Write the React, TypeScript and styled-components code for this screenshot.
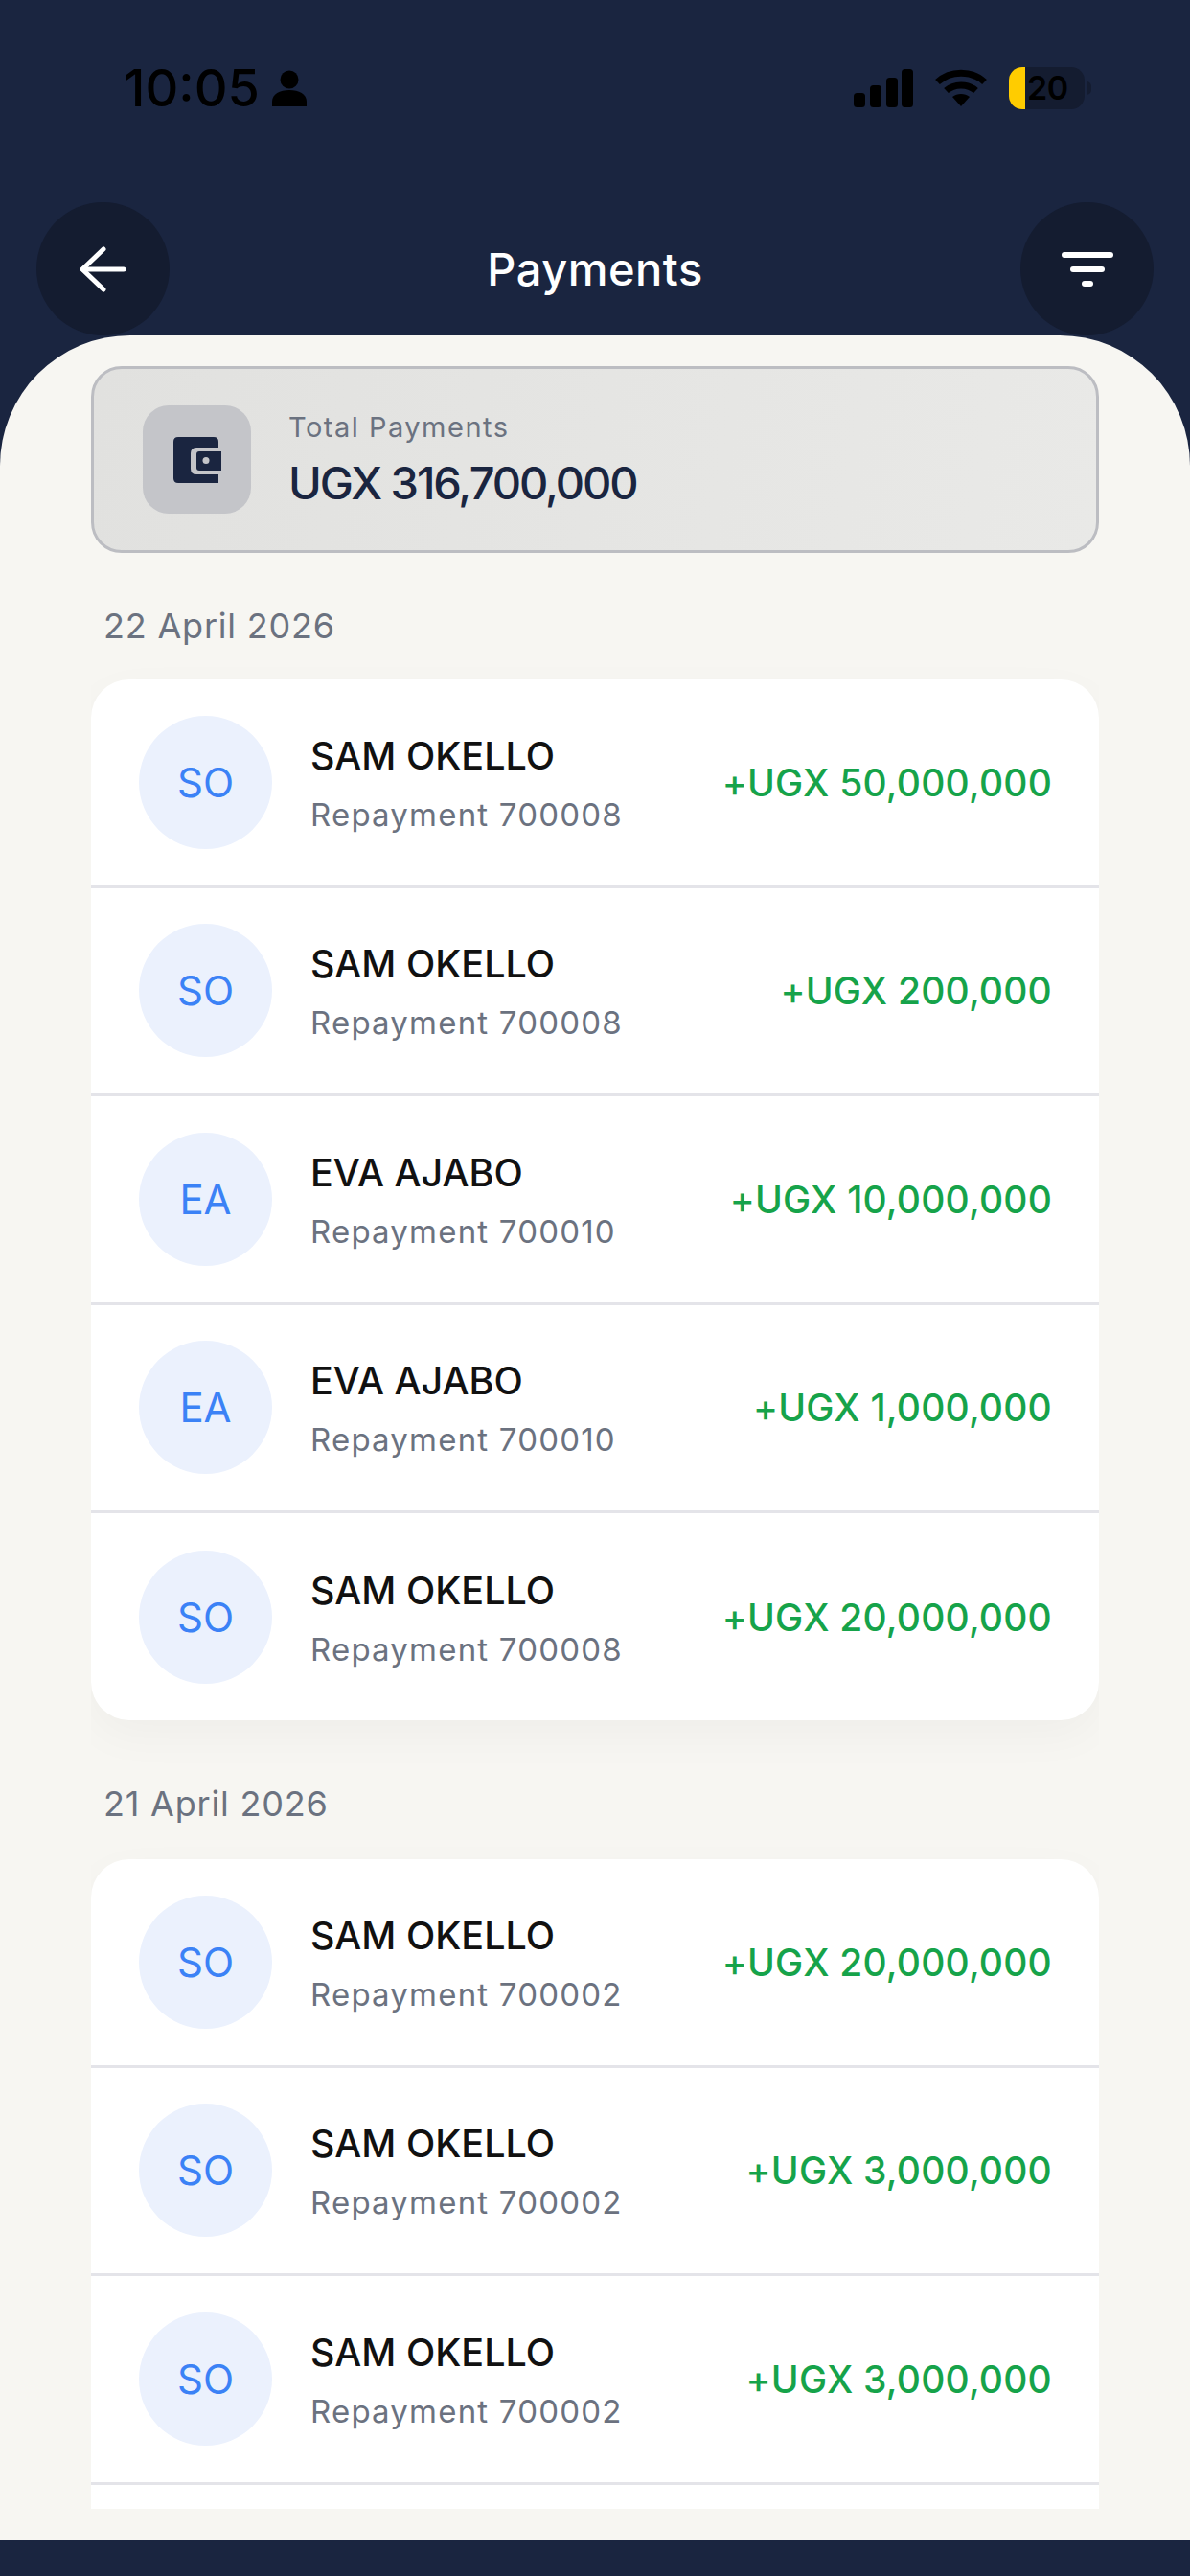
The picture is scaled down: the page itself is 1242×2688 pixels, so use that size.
import styled, { createGlobalStyle } from 'styled-components';

const GlobalStyle = createGlobalStyle`
  * {
    box-sizing: border-box;
  }

  html,
  body {
    margin: 0;
    padding: 0;
    background: #1a2540;
  }

  body {
    font-family: 'Inter', 'Liberation Sans', sans-serif;
  }
`;

const Page = styled.div`
  display: flex;
  flex-direction: column;
  width: 1242px;
  height: 2688px;
  padding-bottom: 38px;
  background: #1a2540;
  overflow: hidden;
`;

const StatusBar = styled.div`
  display: flex;
  justify-content: space-between;
  align-items: flex-start;
  height: 211px;
  padding: 66px 110px 0 129px;
  color: #000;
`;

const StatusLeft = styled.div`
  display: flex;
  align-items: center;
  gap: 13px;
  height: 52px;
`;

const Clock = styled.span`
  font-size: 54px;
  font-weight: 500;
  letter-spacing: 0;
  line-height: 52px;
`;

const StatusRight = styled.div`
  display: flex;
  align-items: center;
  gap: 23px;
  height: 52px;
`;

const Battery = styled.div`
  position: relative;
  display: flex;
  align-items: center;
  width: 79px;
  height: 44px;
  border-radius: 14px;
  background: #141c30;
  overflow: visible;

  &::after {
    content: '';
    position: absolute;
    right: -7px;
    top: 15px;
    width: 5px;
    height: 14px;
    border-radius: 0 5px 5px 0;
    background: #141c30;
  }
`;

const BatteryFill = styled.div`
  width: 17px;
  height: 44px;
  border-radius: 14px 0 0 14px;
  background: #ffcc00;
`;

const BatteryLevel = styled.span`
  padding-left: 2px;
  font-size: 34px;
  font-weight: 600;
  line-height: 44px;
  letter-spacing: -0.5px;
`;

const NavBar = styled.header`
  display: flex;
  justify-content: space-between;
  align-items: center;
  height: 139px;
  padding: 0 38px;
`;

const RoundButton = styled.button`
  display: flex;
  justify-content: center;
  align-items: center;
  width: 139px;
  height: 139px;
  padding: 0;
  border: none;
  border-radius: 50%;
  background: #141c30;
`;

const Title = styled.h1`
  margin: 0;
  color: #fff;
  font-size: 47px;
  font-weight: 500;
  letter-spacing: 0.5px;
`;

const Sheet = styled.main`
  flex: 1;
  min-height: 0;
  display: flex;
  padding: 32px 95px;
  border-radius: 136px 136px 0 0;
  background: #f7f6f2;
`;

const Scroll = styled.div`
  flex: 1;
  overflow: hidden;
`;

const TotalCard = styled.section`
  display: flex;
  align-items: center;
  gap: 39px;
  height: 195px;
  padding: 0 51px;
  border: 3px solid #bcbdc2;
  border-radius: 32px;
  background: linear-gradient(100deg, #e1e1df, #e9e9e7);
`;

const IconBox = styled.div`
  display: flex;
  justify-content: center;
  align-items: center;
  width: 113px;
  height: 113px;
  border-radius: 27px;
  background: #c4c5c9;
`;

const TotalText = styled.div`
  display: flex;
  flex-direction: column;
  gap: 12px;
`;

const TotalLabel = styled.span`
  color: #6b7280;
  font-size: 29px;
  letter-spacing: 1.5px;
  line-height: 36px;
`;

const TotalValue = styled.span`
  color: #1a2540;
  font-size: 47px;
  font-weight: 500;
  letter-spacing: -2.1px;
  line-height: 56px;
`;

const DateLabel = styled.h2<{ $first?: boolean }>`
  margin: ${(p) => (p.$first ? '50px' : '61px')} 0 0 13px;
  height: ${(p) => (p.$first ? '82px' : '84px')};
  color: #6b7280;
  font-size: 36px;
  font-weight: 400;
  letter-spacing: 0.8px;
  line-height: 52px;
`;

const Card = styled.section`
  border-radius: 40px;
  background: #fff;
  box-shadow: 0 16px 48px rgba(0, 0, 0, 0.035);
`;

const Row = styled.div`
  display: flex;
  align-items: center;
  height: 217.5px;
  padding: 0 49px 0 50px;
  border-bottom: 3px solid #e4e4e9;

  &:last-child {
    height: 216px;
    border-bottom: none;
  }
`;

const Avatar = styled.div`
  display: flex;
  justify-content: center;
  align-items: center;
  flex-shrink: 0;
  width: 139px;
  height: 139px;
  margin-right: 40px;
  border-radius: 50%;
  background: #ebf1fd;
  color: #3b82f6;
  font-size: 42px;
  font-weight: 400;
`;

const Party = styled.div`
  flex: 1;
  display: flex;
  flex-direction: column;
  gap: 18px;
  padding-top: 3px;
`;

const Name = styled.span`
  color: #111;
  font-size: 39.5px;
  font-weight: 500;
  line-height: 46px;
`;

const Reference = styled.span`
  color: #6b7280;
  font-size: 33px;
  letter-spacing: 1.2px;
  line-height: 40px;
`;

const Amount = styled.span`
  color: #16a34a;
  font-size: 39px;
  font-weight: 500;
  letter-spacing: 0.2px;
`;

const SignalIcon = () => (
  <svg width="62" height="40" viewBox="0 0 62 40" fill="#000">
    <rect x="0" y="25" width="12" height="15" rx="3.5" />
    <rect x="17" y="17" width="12" height="23" rx="3.5" />
    <rect x="34" y="9" width="12" height="31" rx="3.5" />
    <rect x="50" y="0" width="12" height="40" rx="3.5" />
  </svg>
);

const WifiIcon = () => (
  <svg width="54" height="40" viewBox="0 0 54 40" fill="none" stroke="#000" strokeWidth="7">
    <path d="M2.5 13.5 C16 1 38 1 51.5 13.5" />
    <path d="M11.5 22.5 C20 15 34 15 42.5 22.5" />
    <path d="M18 29 L27 39 L36 29 C31 25 23 25 18 29 Z" fill="#000" stroke="none" />
  </svg>
);

const PersonIcon = () => (
  <svg width="36" height="38" viewBox="0 0 36 38" fill="#000">
    <circle cx="18" cy="10" r="9.5" />
    <path d="M0 38 V33 C0 25 8 21 18 21 C28 21 36 25 36 33 V38 Z" />
  </svg>
);

const BackIcon = () => (
  <svg width="49" height="48" viewBox="0 0 49 48" fill="none" stroke="#fff" strokeWidth="5" strokeLinecap="round" strokeLinejoin="round">
    <path d="M46 24 H4" />
    <path d="M25 3 L3 24 L25 45" />
  </svg>
);

const FilterIcon = () => (
  <svg width="54" height="36" viewBox="0 0 54 36" fill="none" stroke="#fff" strokeWidth="6" strokeLinecap="round">
    <path d="M3 3 H51" />
    <path d="M12 18 H42" />
    <path d="M24 33 H30" />
  </svg>
);

const WalletIcon = () => (
  <svg width="50" height="48" viewBox="0 0 50 48">
    <path d="M5 0 H42 Q47 0 47 5 V48 H5 Q0 48 0 43 V5 Q0 0 5 0 Z" fill="#1a2540" />
    <path d="M24 11 H50 V39 H24 Q18 39 18 33 V17 Q18 11 24 11 Z" fill="#c4c5c9" />
    <path d="M27 15 H50 V35 H27 Q24 35 24 32 V18 Q24 15 27 15 Z" fill="#1a2540" />
    <circle cx="34" cy="24.5" r="3.5" fill="#c4c5c9" />
  </svg>
);

interface Payment {
  initials: string;
  name: string;
  reference: string;
  amount: string;
}

const firstDay: Payment[] = [
  { initials: 'SO', name: 'SAM OKELLO', reference: 'Repayment 700008', amount: '+UGX 50,000,000' },
  { initials: 'SO', name: 'SAM OKELLO', reference: 'Repayment 700008', amount: '+UGX 200,000' },
  { initials: 'EA', name: 'EVA AJABO', reference: 'Repayment 700010', amount: '+UGX 10,000,000' },
  { initials: 'EA', name: 'EVA AJABO', reference: 'Repayment 700010', amount: '+UGX 1,000,000' },
  { initials: 'SO', name: 'SAM OKELLO', reference: 'Repayment 700008', amount: '+UGX 20,000,000' },
];

const secondDay: Payment[] = [
  { initials: 'SO', name: 'SAM OKELLO', reference: 'Repayment 700002', amount: '+UGX 20,000,000' },
  { initials: 'SO', name: 'SAM OKELLO', reference: 'Repayment 700002', amount: '+UGX 3,000,000' },
  { initials: 'SO', name: 'SAM OKELLO', reference: 'Repayment 700002', amount: '+UGX 3,000,000' },
];

const PaymentRow = ({ payment }: { payment: Payment }) => (
  <Row>
    <Avatar>{payment.initials}</Avatar>
    <Party>
      <Name>{payment.name}</Name>
      <Reference>{payment.reference}</Reference>
    </Party>
    <Amount>{payment.amount}</Amount>
  </Row>
);

const App = () => {
  return (
    <Page>
      <GlobalStyle />
      <StatusBar>
        <StatusLeft>
          <Clock>10:05</Clock>
          <PersonIcon />
        </StatusLeft>
        <StatusRight>
          <SignalIcon />
          <WifiIcon />
          <Battery>
            <BatteryFill />
            <BatteryLevel>20</BatteryLevel>
          </Battery>
        </StatusRight>
      </StatusBar>

      <NavBar>
        <RoundButton aria-label="Back">
          <BackIcon />
        </RoundButton>
        <Title>Payments</Title>
        <RoundButton aria-label="Filter">
          <FilterIcon />
        </RoundButton>
      </NavBar>

      <Sheet>
        <Scroll>
          <TotalCard>
            <IconBox>
              <WalletIcon />
            </IconBox>
            <TotalText>
              <TotalLabel>Total Payments</TotalLabel>
              <TotalValue>UGX 316,700,000</TotalValue>
            </TotalText>
          </TotalCard>

          <DateLabel $first>22 April 2026</DateLabel>
          <Card>
            {firstDay.map((payment, i) => (
              <PaymentRow key={i} payment={payment} />
            ))}
          </Card>

          <DateLabel>21 April 2026</DateLabel>
          <Card>
            {secondDay.map((payment, i) => (
              <PaymentRow key={i} payment={payment} />
            ))}
            {/* next row starts just above the fold */}
            <Row />
          </Card>
        </Scroll>
      </Sheet>
    </Page>
  );
};

export default App;
